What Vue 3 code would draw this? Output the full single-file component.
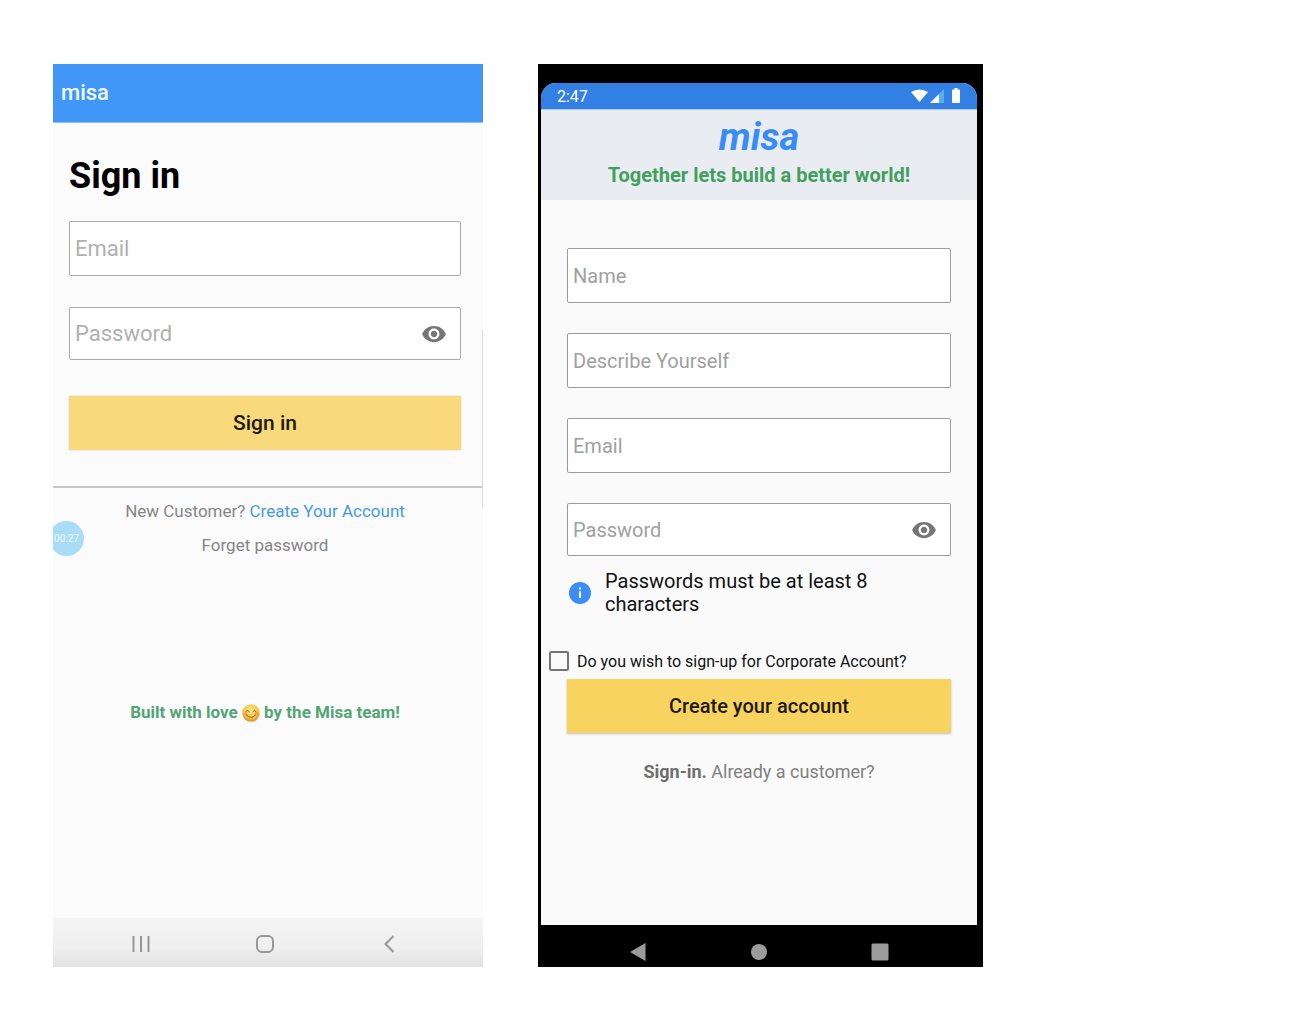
<script setup>
import { ref } from 'vue'

const showSignInPassword = ref(false)
const showSignUpPassword = ref(false)
const corporate = ref(false)

const signUpFields = [
  { id: 'signup-name', label: 'Name', type: 'text' },
  { id: 'signup-about', label: 'Describe Yourself', type: 'text' },
  { id: 'signup-email', label: 'Email', type: 'email' },
]
</script>

<template>
  <main class="page">
    <section class="phone signin">
      <header class="appbar">misa</header>
      <div class="signin-body">
        <form class="signin-form" @submit.prevent>
          <h1 class="title">Sign in</h1>
          <div class="field">
            <input id="signin-email" type="email" placeholder="Email" aria-label="Email" />
          </div>
          <div class="field short">
            <input id="signin-password" :type="showSignInPassword ? 'text' : 'password'" placeholder="Password" aria-label="Password" />
            <button class="eye" type="button" aria-label="Show password" @click="showSignInPassword = !showSignInPassword">
              <svg viewBox="0 0 24 24" aria-hidden="true"><path d="M12 4.500C7 4.500 2.730 7.610 1 12c1.730 4.390 6 7.500 11 7.500s9.270-3.110 11-7.500c-1.730-4.390-6-7.500-11-7.500zM12 17c-2.760 0-5-2.240-5-5s2.240-5 5-5 5 2.240 5 5-2.240 5-5 5zm0-8c-1.660 0-3 1.340-3 3s1.340 3 3 3 3-1.340 3-3-1.340-3-3-3z" /></svg>
            </button>
          </div>
          <button class="primary" type="submit">Sign in</button>
        </form>
        <div class="links">
          <p>New Customer? <a class="create" href="#create">Create Your Account</a></p>
          <p><a href="#forgot">Forget password</a></p>
        </div>
        <p class="built">
          Built with love
          <svg class="smile" viewBox="0 0 18 18" role="img" aria-label="smiling face">
            <defs>
              <radialGradient id="face" cx="50%" cy="35%" r="65%">
                <stop offset="0" stop-color="#fbe58b" />
                <stop offset="0.6" stop-color="#f5c84f" />
                <stop offset="1" stop-color="#dc8f2c" />
              </radialGradient>
            </defs>
            <circle cx="9" cy="9" r="8.700" fill="url(#face)" />
            <circle cx="3.600" cy="10.300" r="2" fill="#f09045" opacity=".6" />
            <circle cx="14.400" cy="10.300" r="2" fill="#f09045" opacity=".6" />
            <path d="M3.800 7.600Q5.500 5 7.200 7.600M10.800 7.600Q12.500 5 14.200 7.600M4.600 11Q9 16 13.400 11" fill="none" stroke="#986323" stroke-width="1" stroke-linecap="round" />
          </svg>
          by the Misa team!
        </p>
        <span class="timer">00:27</span>
        <span class="edge"></span>
      </div>
      <nav class="navbar light">
        <button type="button" aria-label="Recents">
          <svg viewBox="0 0 24 24"><path d="M4.500 4v16M12 4v16M19.500 4v16" /></svg>
        </button>
        <button type="button" aria-label="Home">
          <svg viewBox="0 0 24 24"><rect x="4" y="4" width="16" height="16" rx="5" /></svg>
        </button>
        <button type="button" aria-label="Back">
          <svg viewBox="0 0 24 24"><path d="M16.500 4L8.500 12l8 8" /></svg>
        </button>
      </nav>
    </section>

    <section class="phone signup">
      <div class="screen">
        <div class="status">
          <span>2:47</span>
          <svg class="signals" viewBox="0 0 50 16" aria-hidden="true">
            <path d="M0 4Q8.500-1 17 4L8.500 14z" fill="#fff" />
            <path d="M33 1v14H19z" fill="#5aaef2" />
            <path d="M28 6v9h-9z" fill="#fff" />
            <path d="M43.500 0h3v1.500H48q1 0 1 1V14q0 1-1 1h-6q-1 0-1-1V2.500q0-1 1-1h1.500z" fill="#fff" />
          </svg>
        </div>
        <header class="brand">
          <h2>misa</h2>
          <p>Together lets build a better world!</p>
        </header>
        <form class="signup-form" @submit.prevent>
          <div v-for="field in signUpFields" :key="field.id" class="field">
            <input :id="field.id" :type="field.type" :placeholder="field.label" :aria-label="field.label" />
          </div>
          <div class="field short">
            <input id="signup-password" :type="showSignUpPassword ? 'text' : 'password'" placeholder="Password" aria-label="Password" />
            <button class="eye" type="button" aria-label="Show password" @click="showSignUpPassword = !showSignUpPassword">
              <svg viewBox="0 0 24 24" aria-hidden="true"><path d="M12 4.500C7 4.500 2.730 7.610 1 12c1.730 4.390 6 7.500 11 7.500s9.270-3.110 11-7.500c-1.730-4.390-6-7.500-11-7.500zM12 17c-2.760 0-5-2.240-5-5s2.240-5 5-5 5 2.240 5 5-2.240 5-5 5zm0-8c-1.660 0-3 1.340-3 3s1.340 3 3 3 3-1.340 3-3-1.340-3-3-3z" /></svg>
            </button>
          </div>
          <div class="hint">
            <svg viewBox="0 0 24 24" aria-hidden="true">
              <circle cx="12" cy="12" r="12" fill="#3b8df8" />
              <path d="M10.900 6h2.200v2.200h-2.200zM10.900 10h2.200v7.500h-2.200z" fill="#fff" />
            </svg>
            <p>Passwords must be at least 8 characters</p>
          </div>
          <label class="check">
            <input v-model="corporate" type="checkbox" />
            Do you wish to sign-up for Corporate Account?
          </label>
          <button class="primary" type="submit">Create your account</button>
          <p class="already"><a href="#signin">Sign-in.</a> Already a customer?</p>
        </form>
      </div>
      <nav class="navbar dark">
        <button type="button" aria-label="Back">
          <svg viewBox="0 0 24 24"><path d="M4 12L19.500 3v18z" /></svg>
        </button>
        <button type="button" aria-label="Home">
          <svg viewBox="0 0 24 24"><circle cx="12" cy="12" r="8" /></svg>
        </button>
        <button type="button" aria-label="Recents">
          <svg viewBox="0 0 24 24"><rect x="3.500" y="3.500" width="17" height="17" rx="1.500" /></svg>
        </button>
      </nav>
    </section>
  </main>
</template>

<style>
body {
  background: #fff;
}
</style>

<style scoped>
* {
  box-sizing: border-box;
}

.page {
  display: grid;
  grid-template-columns: minmax(0, 430fr) minmax(0, 445fr);
  gap: 55px;
  min-height: 100vh;
  padding: 64px 24.5% 65px 53px;
  font-family: Roboto, "Liberation Sans", sans-serif;
}

h1,
h2,
p {
  margin: 0;
}

a {
  color: inherit;
  text-decoration: none;
}

button {
  padding: 0;
  border: 0;
  background: none;
  font-family: inherit;
  cursor: pointer;
}

.phone {
  display: flex;
  flex-direction: column;
  overflow: hidden;
}

.field {
  display: flex;
  align-items: center;
  height: 55px;
  border: 1px solid #9c9c9c;
  border-radius: 2px;
  background: #fff;
}

.field.short {
  height: 53px;
}

.field input {
  flex: 1;
  min-width: 0;
  height: 100%;
  padding: 0 5px;
  border: 0;
  outline: 0;
  background: none;
  font-family: inherit;
  font-size: 20px;
  color: #222;
}

.field input::placeholder {
  color: #a0a0a0;
  opacity: 1;
}

.eye {
  width: 26px;
  height: 26px;
  margin-right: 13px;
}

.eye svg {
  display: block;
  fill: #757575;
}

.primary {
  display: block;
  width: 100%;
  height: 54px;
  background: #f8d360;
  box-shadow: 0 1px 2px rgba(0, 0, 0, 0.25);
  font-size: 20px;
  font-weight: 500;
  color: #1d190c;
}

.signin {
  background: #fbfbfb;
}

.appbar {
  height: 59px;
  padding: 0 8px;
  border-bottom: 1px solid #8fc0f6;
  background: #4097f8;
  line-height: 57px;
  font-size: 22px;
  font-weight: 500;
  color: #f2f8ff;
}

.signin-body {
  position: relative;
  flex: 1;
}

.signin-form {
  padding: 31px 22px 36px 16px;
  border-bottom: 2px solid #c6c6c6;
}

.title {
  margin-bottom: 23px;
  line-height: 44px;
  font-size: 36px;
  font-weight: 700;
  color: #000;
}

.signin .field {
  margin-bottom: 31px;
  border-color: #ababab;
}

.signin .field.short {
  margin-bottom: 36px;
}

.signin .field input {
  font-size: 22px;
}

.signin .field input::placeholder {
  color: #b0b0b0;
}

.signin .primary {
  background: #f8d97c;
  box-shadow: 0 0 2px rgba(0, 0, 0, 0.15);
  font-size: 21px;
}

.links {
  display: grid;
  gap: 10px;
  padding: 11px 6px 0 0;
  line-height: 24px;
  text-align: center;
  font-size: 17px;
  color: #868686;
}

.create {
  color: #4499ea;
}

.built {
  padding: 143px 6px 0 0;
  line-height: 24px;
  text-align: center;
  font-size: 17px;
  font-weight: 700;
  color: #52a574;
}

.smile {
  width: 18px;
  height: 18px;
  vertical-align: -4px;
}

.timer {
  position: absolute;
  top: 398px;
  left: -4px;
  width: 35px;
  height: 35px;
  border-radius: 50%;
  background: #a9dcf6;
  line-height: 35px;
  text-align: center;
  font-size: 10px;
  color: #eef9ff;
}

.edge {
  position: absolute;
  top: 207px;
  right: 0;
  width: 1px;
  height: 178px;
  background: #dcdcdc;
}

.navbar {
  display: flex;
  justify-content: space-between;
  align-items: center;
}

.navbar svg {
  display: block;
  width: 24px;
  height: 24px;
}

.light {
  height: 49px;
  padding: 2px 82px 0 76px;
  background: linear-gradient(#f4f4f4, #efefef 60%, #e2e2e2);
}

.light svg {
  fill: none;
  stroke: #979797;
  stroke-width: 2;
}

.signup {
  padding: 19px 6px 0 3px;
  background: #000;
}

.screen {
  flex: 1;
  overflow: hidden;
  border-radius: 15px 15px 0 0;
  background: #fafafa;
}

.status {
  display: flex;
  justify-content: space-between;
  align-items: center;
  height: 27px;
  padding: 0 16px;
  border-bottom: 1px solid #a5c9f2;
  background: #3380e5;
  font-size: 16px;
  color: #fff;
}

.signals {
  width: 50px;
  height: 16px;
}

.brand {
  height: 90px;
  padding-top: 4px;
  background: #e9edf1;
  text-align: center;
}

.brand h2 {
  line-height: 46px;
  font-size: 38px;
  font-style: italic;
  font-weight: 700;
  color: #388cf8;
}

.brand p {
  line-height: 31px;
  font-size: 20px;
  font-weight: 700;
  color: #439f60;
}

.signup-form {
  padding: 48px 26px 24px;
}

.signup-form .field:not(.short) {
  margin-bottom: 30px;
}

.hint {
  display: flex;
  align-items: center;
  gap: 14px;
  padding: 14px 60px 0 2px;
  line-height: 23px;
  font-size: 20px;
  color: #111;
}

.hint svg {
  flex: none;
  width: 22px;
  height: 22px;
}

.check {
  display: flex;
  align-items: center;
  gap: 8px;
  height: 36px;
  margin: 27px 0 0 -18px;
  font-size: 16px;
  color: #111;
}

.check input {
  appearance: none;
  width: 20px;
  height: 20px;
  margin: 0;
  border: 2px solid #757575;
  border-radius: 2px;
}

.check input:checked {
  background: #388cf8;
}

.already {
  padding-top: 27px;
  line-height: 24px;
  text-align: center;
  font-size: 18px;
  color: #808080;
}

.already a {
  font-weight: 700;
  color: #6f6f6f;
}

.dark {
  height: 42px;
  padding: 12px 85px 0 85px;
}

.dark svg {
  fill: #9b9b9b;
}
</style>
